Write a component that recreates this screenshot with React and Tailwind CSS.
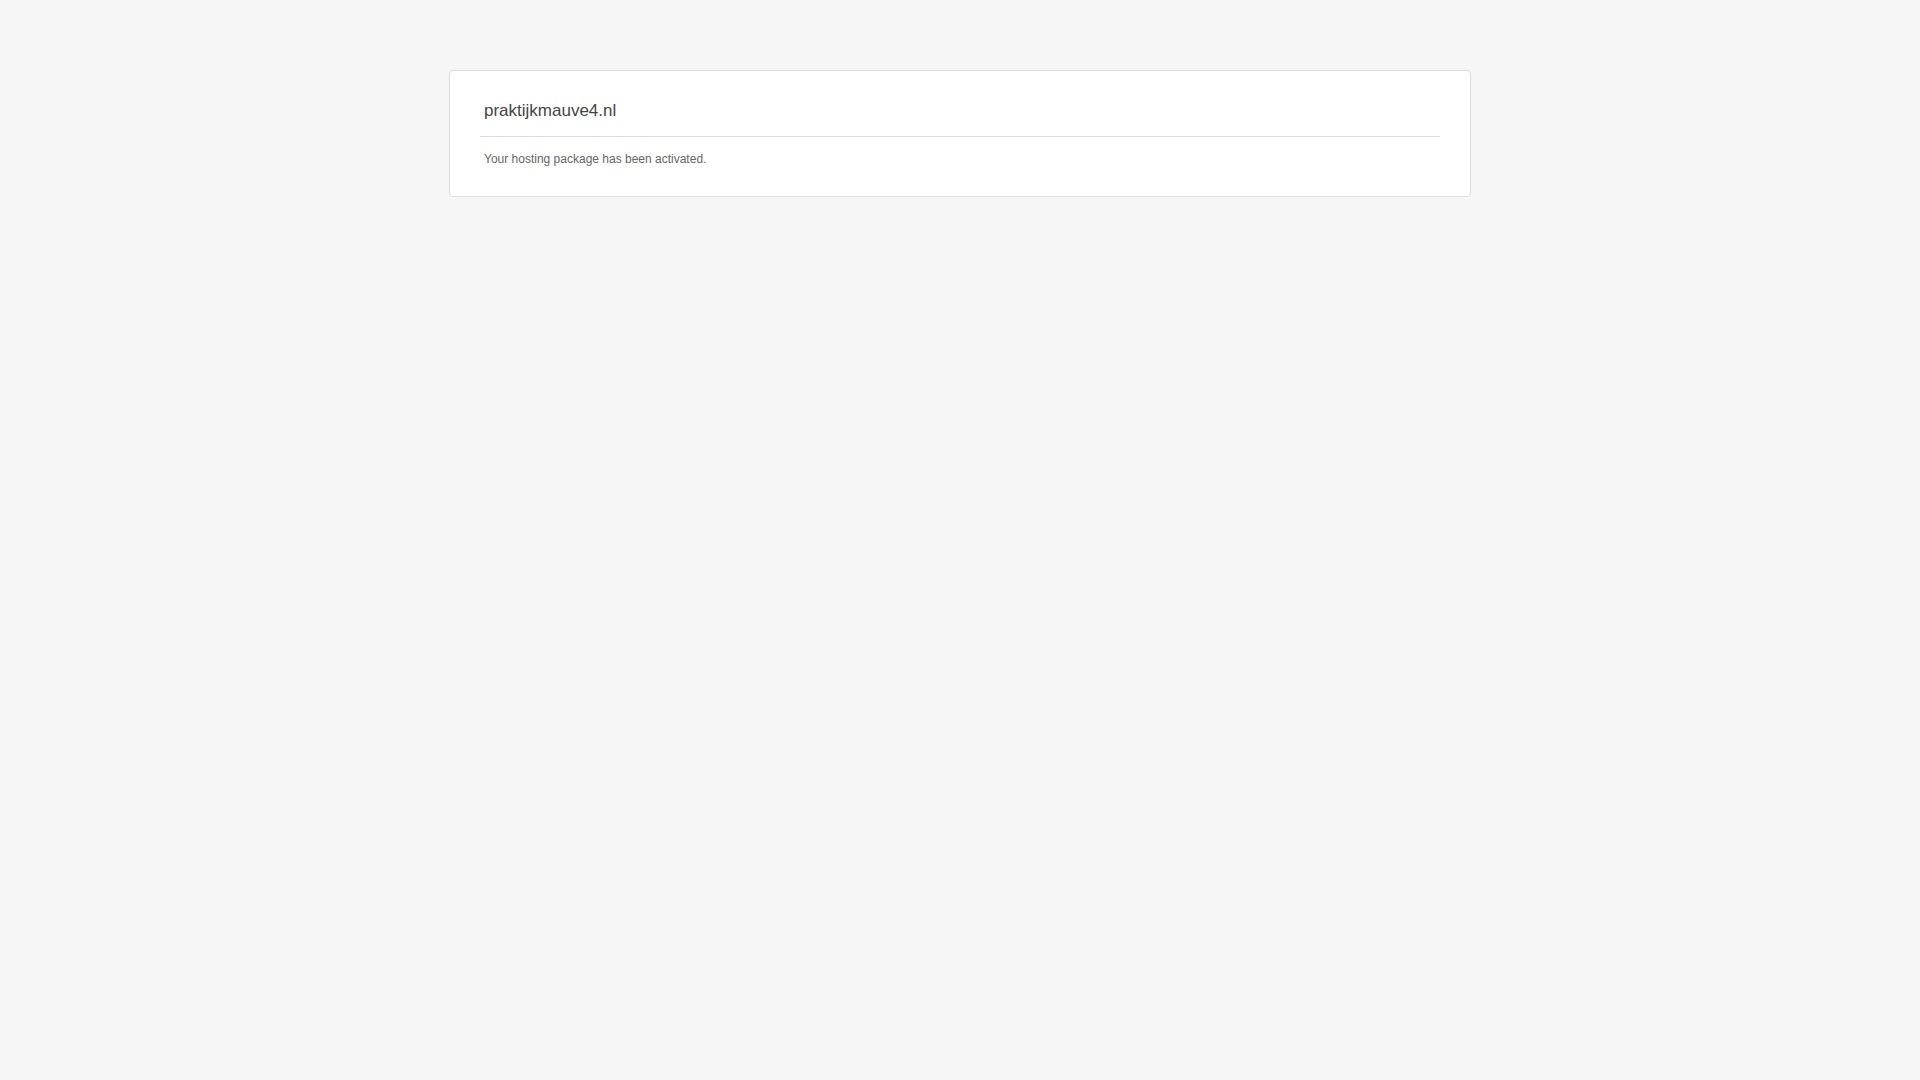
export default function App() {
  return (
    <div className="min-h-screen bg-[#f5f5f5] pt-[70px]" style={{ fontFamily: '"Liberation Sans", Arial, sans-serif' }}>
      <div className="mx-auto w-[1022px] rounded-[4px] border border-[#dddddd] bg-white px-[30px]">
        <h1 className="pl-[4px] pt-[30px] text-[17px] leading-[20px] font-normal text-[#444444]">praktijkmauve4.nl</h1>
        <div className="mt-[15px] h-px bg-[#dddddd]" />
        <p className="pl-[4px] pt-[14px] pb-[29px] text-[12px] leading-[16px] text-[#666666]">Your hosting package has been activated.</p>
      </div>
    </div>
  );
}
